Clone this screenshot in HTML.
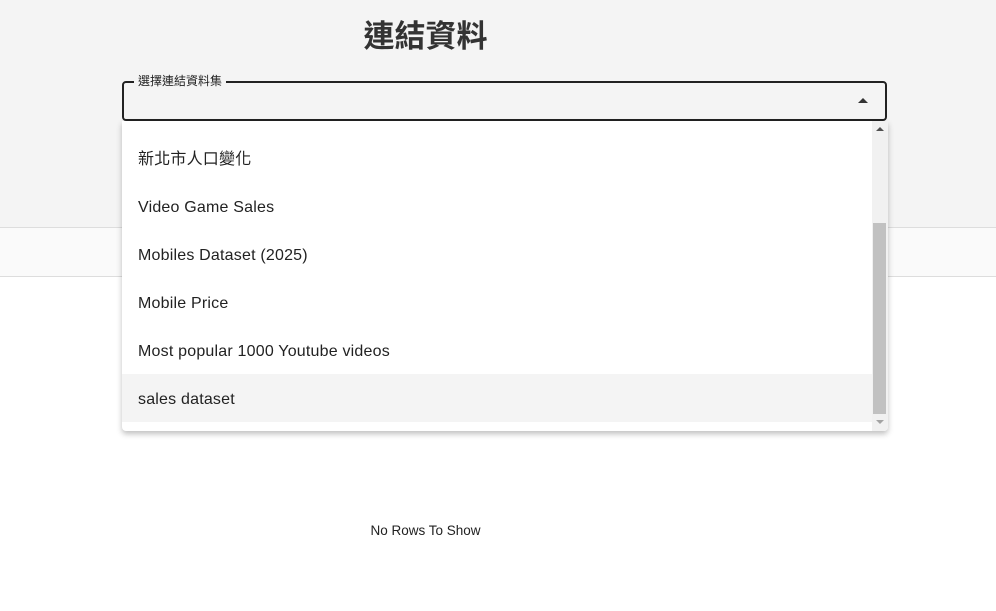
<!DOCTYPE html>
<html><head><meta charset="utf-8"><style>
*{margin:0;padding:0;box-sizing:border-box}
body{width:996px;height:611px;overflow:hidden;background:#fff;font-family:"Liberation Sans","Noto Sans CJK TC",sans-serif;position:relative;color:#222}
.top{position:absolute;left:0;top:0;width:996px;height:227px;background:#f4f4f4}
.band{position:absolute;left:0;top:227px;width:996px;height:50px;background:#fafafa;border-top:1px solid #ddd;border-bottom:1px solid #ddd}
h1{position:absolute;left:0;width:851px;text-align:center;top:11px;font-size:31px;font-weight:bold;color:#333}
.box{position:absolute;left:122px;top:81px;width:765px;height:40px;border:2px solid #222;border-radius:4px}
.lbl{position:absolute;left:134px;top:72px;font-size:12px;background:#f4f4f4;padding:0 4px;color:#222}
.arr{position:absolute;left:858px;top:98px;width:0;height:0;border-left:5px solid transparent;border-right:5px solid transparent;border-bottom:5px solid #333}
.menu{position:absolute;left:122px;top:121px;width:766px;height:310px;background:#fff;border-radius:0 0 4px 4px;box-shadow:0 3px 6px rgba(0,0,0,.25);overflow:hidden}
.item{position:absolute;left:0;width:750px;height:48px;line-height:48px;padding-left:16px;font-size:16px;letter-spacing:0.2px;color:#222}
.sel{background:#f4f4f4}
.track{position:absolute;left:750px;top:0;width:16px;height:310px;background:#f1f1f1}
.thumb{position:absolute;left:751px;top:102px;width:13px;height:191px;background:#c1c1c1}
.up{position:absolute;left:754px;top:6px;border-left:4px solid transparent;border-right:4px solid transparent;border-bottom:4px solid #505050}
.dn{position:absolute;left:754px;top:299px;border-left:4px solid transparent;border-right:4px solid transparent;border-top:4px solid #a3a3a3}
.empty{position:absolute;left:0;width:851px;text-align:center;top:523px;font-size:13.5px;color:#222}
</style></head><body>
<div class="top"></div><div class="band"></div>
<h1>連結資料</h1>
<div class="box"></div>
<div class="lbl">選擇連結資料集</div>
<div class="arr"></div>
<div class="empty">No Rows To Show</div>
<div class="menu">
<div class="item" style="top:15px">新北市人口變化</div>
<div class="item" style="top:63px">Video Game Sales</div>
<div class="item" style="top:111px">Mobiles Dataset (2025)</div>
<div class="item" style="top:159px">Mobile Price</div>
<div class="item" style="top:207px">Most popular 1000 Youtube videos</div>
<div class="item sel" style="top:253px;line-height:52px">sales dataset</div>
<div class="track"></div><div class="thumb"></div><div class="up"></div><div class="dn"></div>
</div>
</body></html>
